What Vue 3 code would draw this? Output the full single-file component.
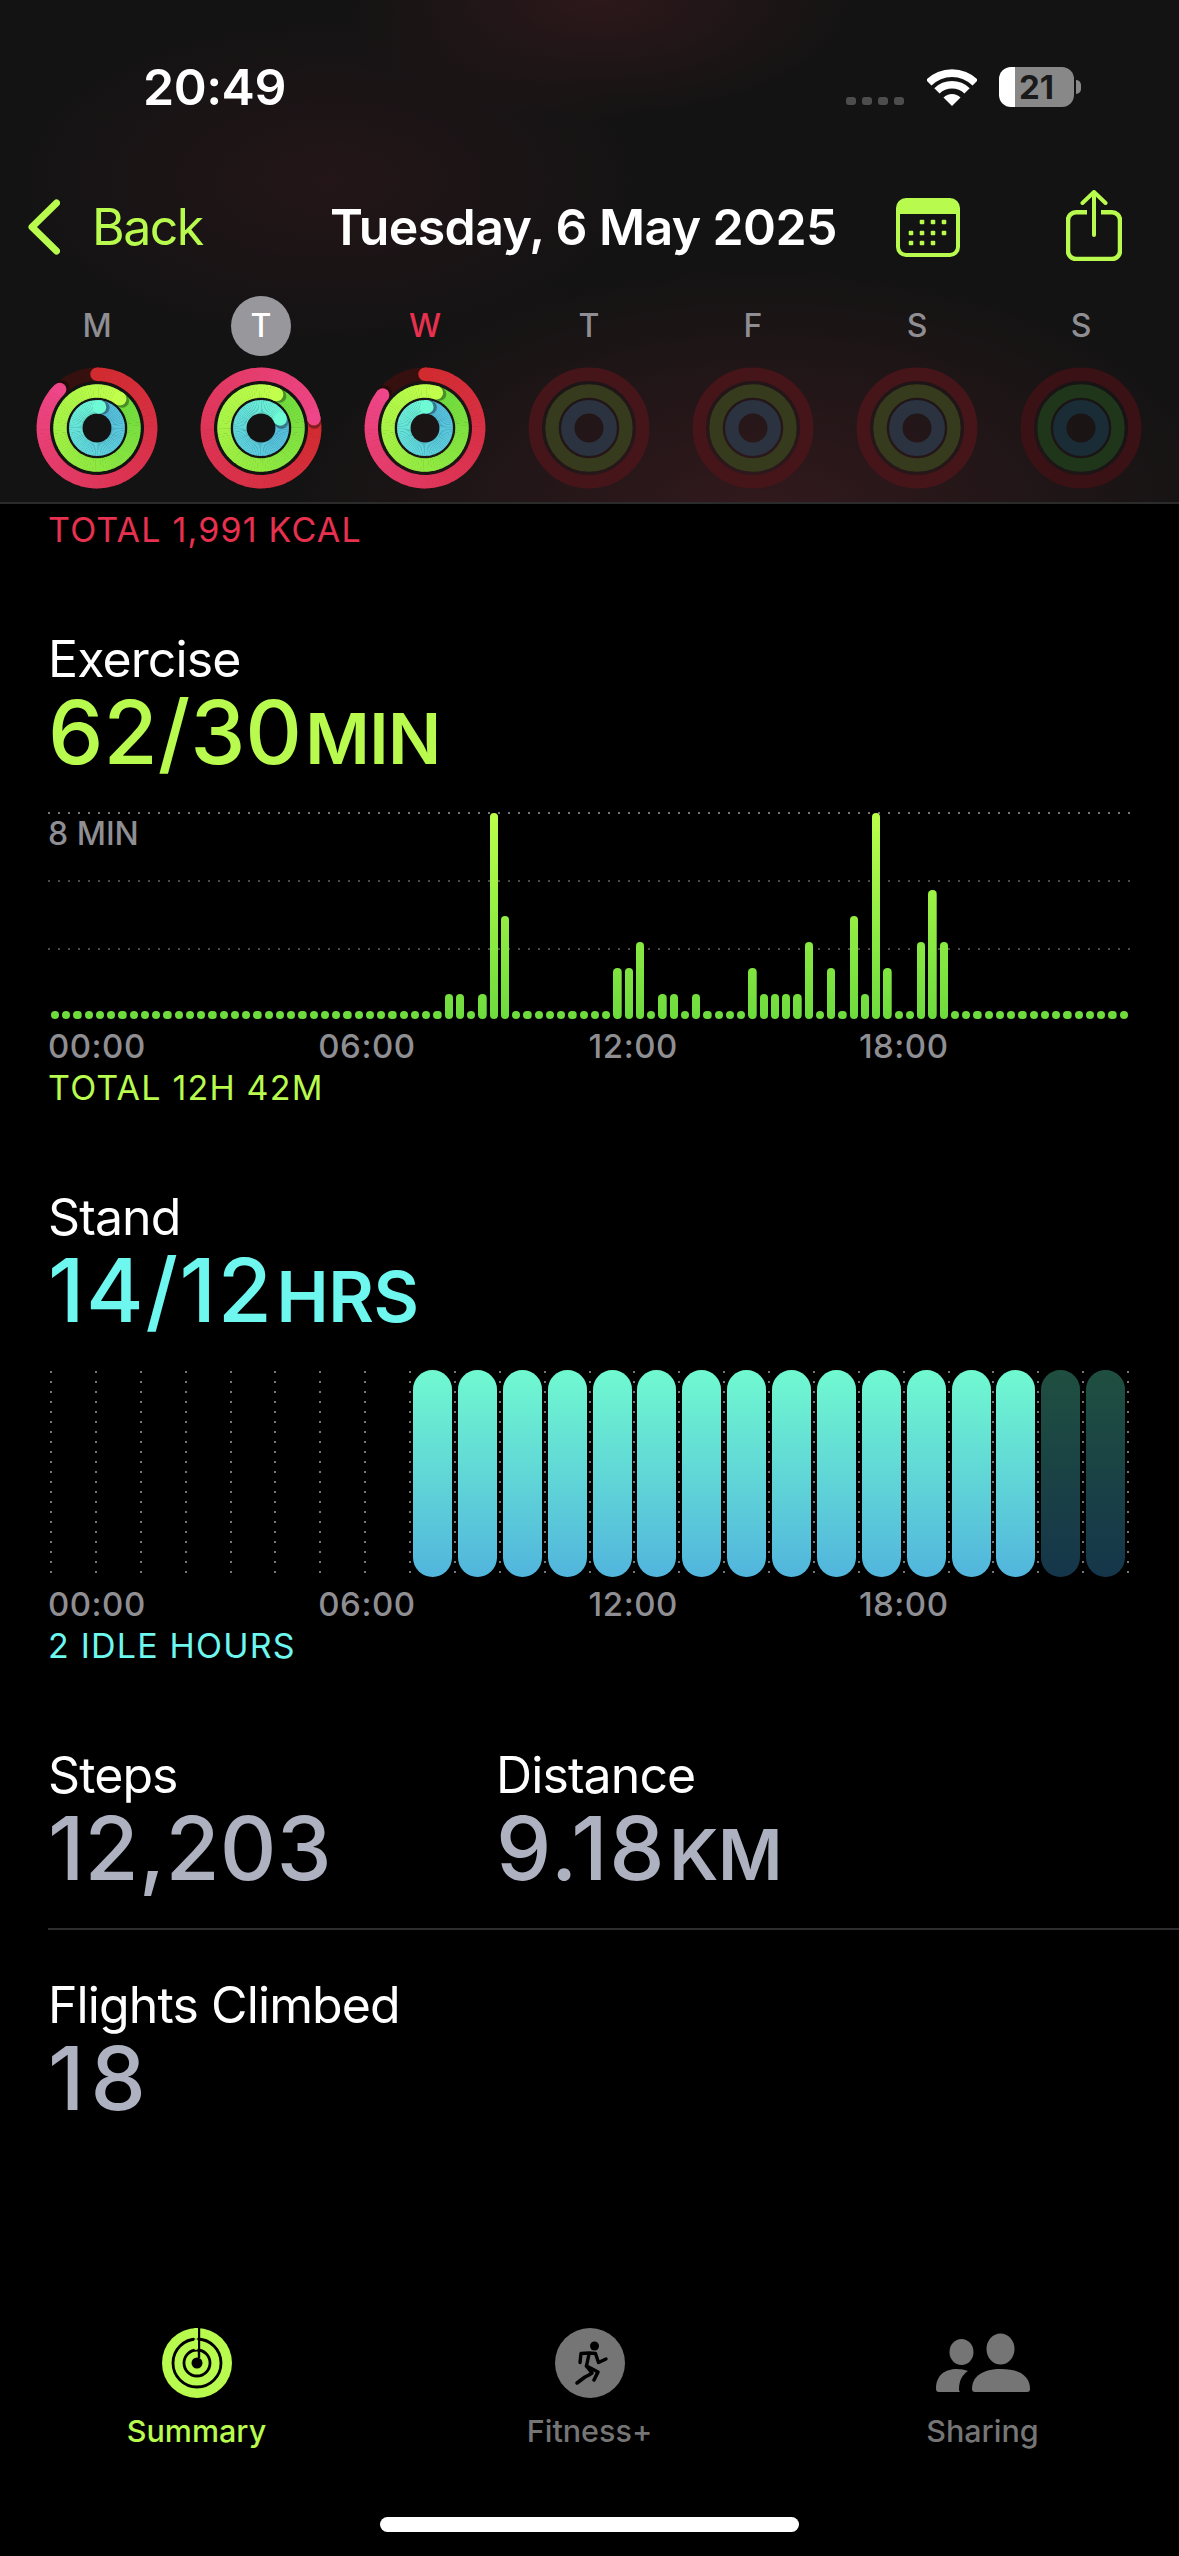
<template>
  <div class="screen">
    <header class="header">
      <div class="status">
        <span class="time">20:49</span>
        <div class="signal"><i v-for="n in 4" :key="n"></i></div>
        <svg class="wifi" width="50" height="37" viewBox="-25 -37 50 37">
          <path d="M-26-26A37 37 0 0 1 26-26L20.5-20.5A29 29 0 0 0-20.5-20.5Z" fill="#fff" />
          <path d="M-17.7-17.7A25 25 0 0 1 17.7-17.7L12.4-12.4A17.5 17.5 0 0 0-12.4-12.4Z" fill="#fff" />
          <path d="M-8.5-8.5A12 12 0 0 1 8.5-8.5L0 0Z" fill="#fff" />
        </svg>
        <div class="battery">
          <div class="battery-body"><span>21</span></div>
          <div class="battery-nub"></div>
        </div>
      </div>

      <nav class="nav">
        <div class="back">
          <svg width="32" height="56" viewBox="0 0 32 56">
            <path d="M28.5 4 4 28l24.5 24" fill="none" stroke="#b8fb4e" stroke-width="7" stroke-linecap="round" stroke-linejoin="round" />
          </svg>
          <span>Back</span>
        </div>
        <div class="title">Tuesday, 6 May 2025</div>
        <svg class="calendar" width="64" height="59" viewBox="0 0 64 59">
          <rect x="2" y="2" width="60" height="55" rx="8" fill="none" stroke="#b8fb4e" stroke-width="4" />
          <path d="M2 16V9a7 7 0 0 1 7-7h46a7 7 0 0 1 7 7v7Z" fill="#b8fb4e" />
          <rect v-for="(d, i) in calendarDots" :key="i" :x="d[0] - 2.3" :y="d[1] - 2.3" width="4.6" height="4.6" rx="1" fill="#b8fb4e" />
        </svg>
        <svg class="share" width="56" height="71" viewBox="0 0 56 71">
          <path d="M21 22.2H10a8 8 0 0 0-8 8V61a8 8 0 0 0 8 8h36a8 8 0 0 0 8-8V30.200a8 8 0 0 0-8-8H35" fill="none" stroke="#b8fb4e" stroke-width="4.500" />
          <path d="M28 45V2M16.500 13 28 2l11.500 11" fill="none" stroke="#b8fb4e" stroke-width="4" stroke-linecap="round" stroke-linejoin="round" />
        </svg>
      </nav>

      <div class="week">
        <div v-for="day in week" :key="day.id" class="day">
          <div class="day-label" :class="day.tone">{{ day.letter }}</div>
          <svg width="122" height="122" viewBox="-61 -61 122 122">
            <template v-if="day.rings">
              <g v-for="(ring, r) in day.rings" :key="r">
                <circle :r="ring.r" fill="none" :stroke="ring.track" stroke-width="13.400" />
                <circle :cx="ring.startCap.x" :cy="ring.startCap.y" r="6.700" :fill="ring.startCap.color" />
                <path v-for="(seg, s) in ring.segments" :key="s" :d="seg.d" :stroke="seg.color" fill="none" stroke-width="13.400" />
                <circle :cx="ring.shadow.x" :cy="ring.shadow.y" r="6.900" fill="#000" fill-opacity="0.35" />
                <circle :cx="ring.endCap.x" :cy="ring.endCap.y" r="6.700" :fill="ring.endCap.color" />
              </g>
            </template>
            <g v-else fill="none" stroke-width="13.400">
              <circle r="53.700" :stroke="day.dim[0]" />
              <circle r="37" :stroke="day.dim[1]" />
              <circle r="21.200" :stroke="day.dim[2]" />
            </g>
          </svg>
        </div>
      </div>
    </header>

    <main class="main">
      <div class="note red first-note">TOTAL 1,991 KCAL</div>

      <section class="block">
        <div class="label">Exercise</div>
        <div class="value lime">62/30<small>MIN</small></div>
        <div class="chart">
          <div v-for="y in [0, 68, 136]" :key="y" class="hline" :class="{ top: y === 0 }" :style="{ top: y + 'px' }"></div>
          <div class="chart-max">8 MIN</div>
          <div class="bars">
            <div v-for="(level, i) in exercise" :key="i" class="bar-slot">
              <div class="bar" :style="{ height: barHeight(level) + 'px' }"></div>
            </div>
          </div>
        </div>
        <div class="axis"><span v-for="t in hours" :key="t">{{ t }}</span></div>
        <div class="note lime after-axis">TOTAL 12H 42M</div>
      </section>

      <section class="block">
        <div class="label">Stand</div>
        <div class="value cyan loose">14/12<small>HRS</small></div>
        <div class="stand">
          <div v-for="(h, i) in stand" :key="i" class="hour">
            <div v-if="h" class="pill" :class="{ idle: h === 2 }"></div>
          </div>
          <div class="hour hour-end"></div>
        </div>
        <div class="axis"><span v-for="t in hours" :key="t">{{ t }}</span></div>
        <div class="note cyan after-axis">2 IDLE HOURS</div>
      </section>

      <section class="block pair">
        <div class="pair-cell">
          <div class="label">Steps</div>
          <div class="value grey">12,203</div>
        </div>
        <div>
          <div class="label">Distance</div>
          <div class="value grey loose">9.18<small>KM</small></div>
        </div>
      </section>
      <div class="divider"></div>
      <section class="flights">
        <div class="label">Flights Climbed</div>
        <div class="value grey loosest">18</div>
      </section>
    </main>

    <footer class="tabbar">
      <div class="tabs">
        <div class="tab active">
          <svg width="70" height="70" viewBox="-35 -35 70 70">
            <circle r="35" fill="#b8fb4e" />
            <circle r="24" fill="none" stroke="#000" stroke-width="2.800" />
            <circle r="13" fill="none" stroke="#000" stroke-width="2.800" />
            <circle r="5.500" fill="#000" />
            <path d="M2-35V-24M2-24V-13M2-13V-5" stroke="#000" stroke-width="2.400" fill="none" />
            <path d="M-1-34V-26M-1-22V-15" stroke="#b8fb4e" stroke-width="4" stroke-linecap="round" fill="none" />
          </svg>
          <span>Summary</span>
        </div>
        <div class="tab">
          <svg width="70" height="70" viewBox="-35 -35 70 70">
            <circle r="35" fill="#757575" />
            <circle cx="4.500" cy="-17" r="4.500" fill="#000" />
            <path d="M-1-9-3.500 3M-1-10l-8 .5-1 9M-1-10l6.500 .5 3 9 7.500-3.500" fill="none" stroke="#000" stroke-width="3.400" stroke-linecap="round" stroke-linejoin="round" />
            <path d="M-3.500 3 2 10-1 12-5 14-13 20M-3.500 3 8 9 4 17" fill="none" stroke="#000" stroke-width="3.600" stroke-linecap="round" stroke-linejoin="round" />
          </svg>
          <span>Fitness+</span>
        </div>
        <div class="tab">
          <svg width="94" height="70" viewBox="0 0 94 70">
            <ellipse cx="25.500" cy="24" rx="12" ry="13" fill="#757575" />
            <path d="M0 61C0 47 9 41 21 41c4 0 8 .7 11 2-6 4-9 10-9 18 0 1 0 2 1 3H3c-2 0-3-1-3-3Z" fill="#757575" />
            <ellipse cx="64.500" cy="21" rx="14" ry="15.500" fill="#757575" />
            <path d="M36 61c0-13 11-20 29-20s29 7 29 20c0 2-1 3-3 3H39c-2 0-3-1-3-3Z" fill="#757575" />
          </svg>
          <span>Sharing</span>
        </div>
      </div>
      <div class="home"></div>
    </footer>
  </div>
</template>

<script setup>
const hours = ['00:00', '06:00', '12:00', '18:00']

const calendarDots = [
  [26, 24], [37, 24], [48, 24],
  [15, 35], [26, 35], [37, 35], [48, 35],
  [15, 45], [26, 45], [37, 45],
]

function hexToRgb(hex) {
  return [1, 3, 5].map(i => parseInt(hex.slice(i, i + 2), 16))
}

// colour along a 3-stop ramp, t from 0 to 1
function ramp(stops, t) {
  const pos = t * (stops.length - 1)
  const i = Math.min(Math.floor(pos), stops.length - 2)
  const a = hexToRgb(stops[i])
  const b = hexToRgb(stops[i + 1])
  const f = pos - i
  return `rgb(${a.map((v, k) => Math.round(v + (b[k] - v) * f)).join(',')})`
}

function polar(r, deg) {
  const a = (deg - 90) * Math.PI / 180
  return { x: +(r * Math.cos(a)).toFixed(2), y: +(r * Math.sin(a)).toFixed(2) }
}

function makeRing(r, from, sweep, stops, track) {
  const segments = []
  const step = 4
  for (let d = 0; d < sweep; d += step) {
    const a = polar(r, from + d)
    const b = polar(r, from + Math.min(d + step + 0.6, sweep))
    segments.push({ d: `M${a.x} ${a.y}A${r} ${r} 0 0 1 ${b.x} ${b.y}`, color: ramp(stops, d / sweep) })
  }
  const nudge = 3.2 / r * 180 / Math.PI
  return {
    r,
    track,
    segments,
    startCap: { ...polar(r, from), color: ramp(stops, 0) },
    endCap: { ...polar(r, from + sweep), color: ramp(stops, 1) },
    shadow: polar(r, from + sweep + nudge),
  }
}

const RED = ['#d12b30', '#dd3455', '#ee4688']
const GREEN = ['#6fdb3e', '#97ec42', '#c2ff4c']
const BLUE = ['#54bbdd', '#5fd4dd', '#6ffad6']

function rings(red, green, blue) {
  return [
    makeRing(53.7, red[0], red[1], RED, '#36100f'),
    makeRing(37, green, 360, GREEN, '#2a3a14'),
    makeRing(21.2, blue, 360, BLUE, '#16303a'),
  ]
}

const DIM = ['#45151a', '#353b1c', '#2a333f']
const week = [
  { id: 0, letter: 'M', tone: '', rings: rings([0, 316], 38, 7) },
  { id: 1, letter: 'T', tone: 'today', rings: rings([80, 360], 25, 65) },
  { id: 2, letter: 'W', tone: 'selected', rings: rings([0, 308], 18, 5) },
  { id: 3, letter: 'T', tone: '', dim: DIM },
  { id: 4, letter: 'F', tone: '', dim: DIM },
  { id: 5, letter: 'S', tone: '', dim: DIM },
  { id: 6, letter: 'S', tone: '', dim: ['#3a1114', '#20361a', '#1a2c35'] },
]

// minutes per 15-minute slot, anything not listed is 0
const active = {
  35: 1, 36: 1, 38: 1, 39: 8, 40: 4, 50: 2, 51: 2, 52: 3, 54: 1, 55: 1, 57: 1,
  62: 2, 63: 1, 64: 1, 65: 1, 66: 1, 67: 3, 69: 2, 71: 4, 72: 1, 73: 8, 74: 2,
  77: 3, 78: 5, 79: 3,
}
const exercise = Array.from({ length: 96 }, (_, i) => active[i] || 0)

function barHeight(level) {
  return level ? level * 25.83 : 8.4
}

// 0 empty, 1 stood, 2 idle
const stand = Array.from({ length: 24 }, (_, i) => (i < 8 ? 0 : i < 22 ? 1 : 2))
</script>

<style>
html, body {
  background: #000;
}
</style>

<style scoped>
.screen {
  width: 1179px;
  height: 2556px;
  background: #000;
  color: #fff;
  font-family: Inter, "Liberation Sans", sans-serif;
  display: flex;
  flex-direction: column;
  overflow: hidden;
}

.header {
  height: 504px;
  flex: none;
  box-sizing: border-box;
  border-bottom: 2px solid #2b2b2b;
  background:
    radial-gradient(ellipse 260px 120px at 600px 0, #2d181b, transparent),
    radial-gradient(ellipse 330px 170px at 330px 180px, #231518, transparent),
    radial-gradient(ellipse 480px 260px at 760px 520px, #33191d, transparent),
    #131313;
}

.status {
  display: flex;
  align-items: flex-start;
  padding: 57px 98px 0 143px;
  height: 60px;
}

.time {
  font-size: 50px;
  line-height: 60px;
  font-weight: 600;
  letter-spacing: -0.5px;
  margin-right: auto;
}

.signal {
  display: flex;
  gap: 6px;
  margin: 40px 23px 0 0;
}

.signal i {
  width: 10px;
  height: 8px;
  border-radius: 3px;
  background: #4d4d4d;
}

.wifi {
  margin: 12px 22px 0 0;
}

.battery {
  display: flex;
  align-items: center;
  margin-top: 10px;
}

.battery-body {
  width: 75px;
  height: 40px;
  border-radius: 12px;
  background: linear-gradient(to right, #fff 16px, #888 16px);
  display: flex;
  justify-content: center;
  padding-left: 0;
}

.battery-body span {
  font-size: 33px;
  line-height: 40px;
  font-weight: 700;
  color: #1a1a1a;
}

.battery-nub {
  width: 5px;
  height: 14px;
  margin-left: 2px;
  border-radius: 0 7px 7px 0;
  background: #888;
}

.nav {
  display: flex;
  align-items: center;
  height: 80px;
  margin-top: 70px;
  padding-left: 28px;
}

.back {
  width: 302px;
  flex: none;
  display: flex;
  align-items: center;
  gap: 32px;
  color: #b8fb4e;
  font-size: 50px;
  line-height: 60px;
  letter-spacing: -1.5px;
}

.title {
  width: 566px;
  flex: none;
  font-size: 50px;
  line-height: 60px;
  font-weight: 600;
  letter-spacing: -0.6px;
}

.calendar {
  flex: none;
  margin-right: 106px;
}

.share {
  flex: none;
  margin-top: -3px;
}

.week {
  display: flex;
  padding-left: 15px;
  margin-top: 29px;
}

.day {
  width: 164px;
  display: flex;
  flex-direction: column;
  align-items: center;
  gap: 11px;
}

.day-label {
  width: 60px;
  height: 60px;
  border-radius: 50%;
  text-align: center;
  font-size: 32px;
  line-height: 60px;
  font-weight: 500;
  color: #8e8e93;
}

.day-label.today {
  background: #98979c;
  color: #fff;
}

.day-label.selected {
  color: #e8304f;
}

.main {
  flex: 1;
}

.first-note {
  margin-top: 6px;
}

.note {
  font-size: 34px;
  line-height: 40px;
  font-weight: 400;
  letter-spacing: 1.2px;
  padding-left: 48px;
}

.after-axis {
  margin-top: 1.6px;
}

.red {
  color: #e8304f;
}

.lime {
  color: #b8fb4e;
}

.cyan {
  color: #6ef7ef;
}

.grey {
  color: #adb1c0;
}

.block {
  margin-top: 79.4px;
}

.label {
  font-size: 50px;
  line-height: 60px;
  letter-spacing: -0.9px;
  padding-left: 48px;
}

.value {
  font-size: 88px;
  line-height: 88px;
  font-weight: 450;
  margin-top: -1px;
  padding-left: 48px;
}

.value.loose {
  letter-spacing: 1.6px;
}

.value.loosest {
  letter-spacing: 6px;
}

.value small {
  font-size: 70px;
  line-height: 0;
  font-weight: 600;
  letter-spacing: -0.5px;
  margin-left: 3px;
}

.chart {
  position: relative;
  width: 1083px;
  height: 207px;
  margin: 36px 0 0 48px;
}

.hline {
  position: absolute;
  left: 0;
  right: 0;
  height: 2px;
  background: repeating-linear-gradient(to right, #4c4c4c 0 2px, transparent 2px 10px);
}

.hline.top {
  background: repeating-linear-gradient(to right, #777 0 2px, transparent 2px 10px);
}

.chart-max {
  position: absolute;
  left: 0;
  top: 2px;
  font-size: 32px;
  line-height: 40px;
  font-weight: 500;
  color: #8e8e93;
}

.bars {
  position: absolute;
  inset: 0 0 0 2.8px;
  display: flex;
  align-items: flex-end;
}

.bar-slot {
  width: 11.263px;
  flex: none;
}

.bar {
  width: 8.4px;
  border-radius: 4.2px;
  background: linear-gradient(to bottom, #bcff4a, #6ddb3d) bottom / 100% 207px no-repeat;
}

.axis {
  display: flex;
  padding-left: 48px;
  margin-top: 7px;
}

.axis span {
  width: 270.3px;
  font-size: 33px;
  line-height: 40px;
  font-weight: 500;
  letter-spacing: 0.5px;
  color: #8e8e93;
}

.stand {
  display: flex;
  height: 207px;
  margin: 36px 0 0 50px;
}

.hour {
  width: 44.875px;
  flex: none;
  padding-left: 4px;
  box-sizing: border-box;
  background: repeating-linear-gradient(to bottom, #777 0 2px, transparent 2px 10px) 0 1px / 2px 202px no-repeat;
}

.hour-end {
  width: 2px;
  padding: 0;
}

.pill {
  width: 39px;
  height: 207px;
  border-radius: 20px;
  background: linear-gradient(to bottom, #70f9d0, #52b5dd);
}

.pill.idle {
  background: linear-gradient(to bottom, #1f4f40, #15364a);
}

.pair {
  display: flex;
}

.pair-cell {
  width: 448px;
}

.divider {
  height: 2px;
  margin: 36px 0 0 48px;
  background: #2e2e30;
}

.flights {
  margin-top: 45px;
}

.tabbar {
  flex: none;
  height: 228px;
}

.tabs {
  display: grid;
  grid-template-columns: repeat(3, 393px);
}

.tab {
  display: flex;
  flex-direction: column;
  align-items: center;
  gap: 15px;
  color: #757575;
  font-size: 30.5px;
  line-height: 36px;
  font-weight: 500;
}

.tab.active {
  color: #b8fb4e;
}

.home {
  width: 419px;
  height: 15px;
  margin: 68px auto 0;
  border-radius: 8px;
  background: #fff;
}
</style>
